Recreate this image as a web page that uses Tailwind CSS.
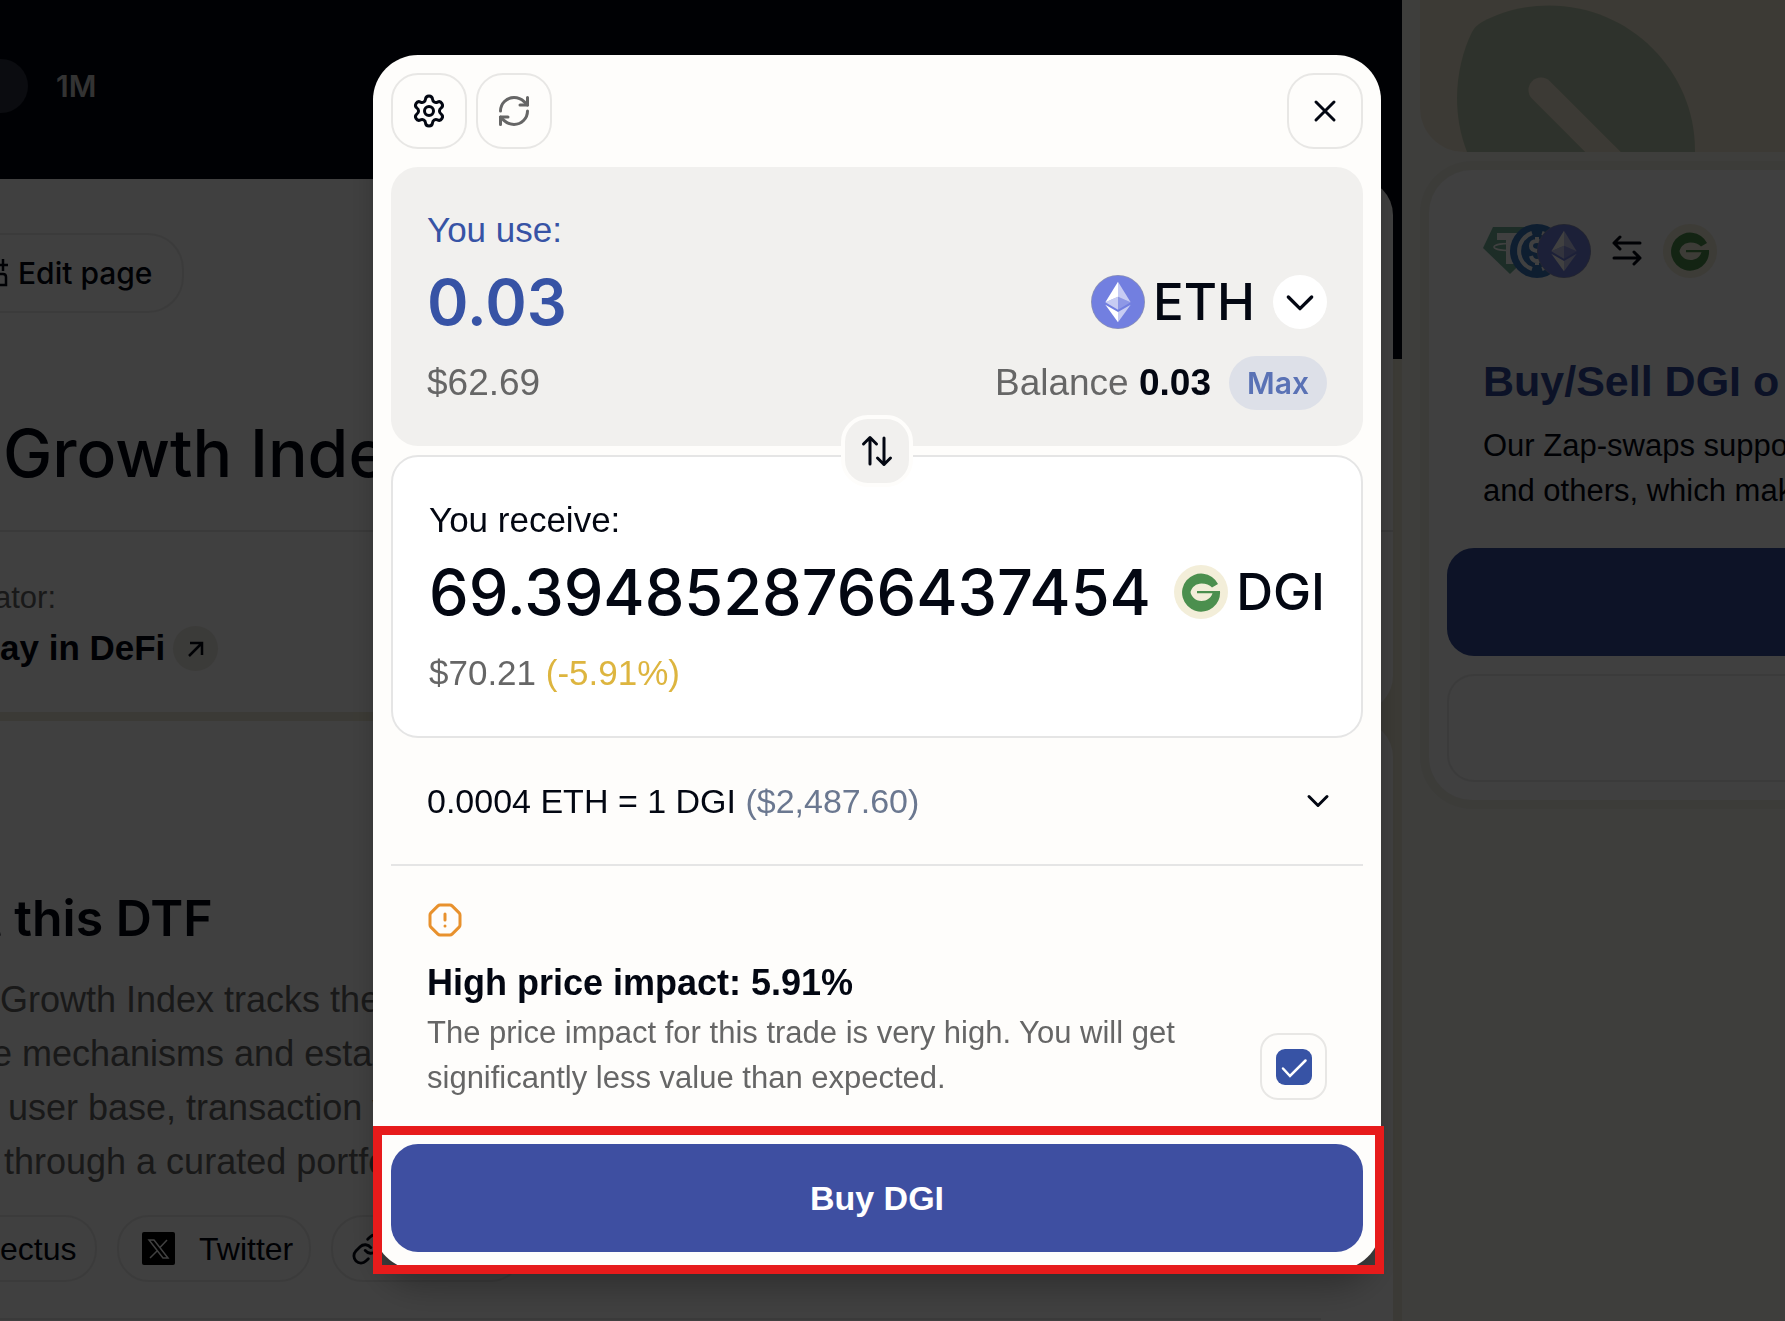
<!DOCTYPE html>
<html lang="en">
<head>
    <meta charset="UTF-8">
    <meta name="viewport" content="width=device-width, initial-scale=1.0">
    <title>Buy DGI</title>
    <script src="https://cdn.jsdelivr.net/npm/@tailwindcss/browser@4"></script>
</head>
<body class="h-screen overflow-hidden bg-[#f6f6ef] font-['Liberation_Sans',Arial,sans-serif] text-[#030712]">

    <!-- Shared token logos -->
    <svg class="hidden" aria-hidden="true">
        <symbol id="eth" viewBox="0 0 32 32">
            <circle cx="16" cy="16" r="16" fill="#8a90b8"/>
            <circle cx="16" cy="16" r="15.5" fill="#727fe0"/>
            <g fill="#fff" transform="translate(-.5 0)">
                <path fill-opacity=".602" d="M16.498 4v8.87l7.497 3.35z"/>
                <path d="M16.498 4L9 16.22l7.498-3.35z"/>
                <path fill-opacity=".602" d="M16.498 21.968v6.027L24 17.616z"/>
                <path d="M16.498 27.995v-6.028L9 17.616z"/>
                <path fill-opacity=".2" d="M16.498 20.573l7.497-4.353-7.497-3.348z"/>
                <path fill-opacity=".602" d="M9 16.22l7.498 4.353v-7.701z"/>
            </g>
        </symbol>
        <symbol id="dgi" viewBox="0 0 54 54">
            <circle cx="27" cy="27" r="27" fill="#f3eed9"/>
            <path fill="#4b8f4e" d="M44 19A19 19 0 1 0 46 26H23v2.300H38.500C37 33 33 36 27.500 36 21 36 17 31 16.500 27 18 22 22 18.500 27.500 18.500c4.500 0 8 1.500 10.500 4z"/>
        </symbol>
    </svg>

    <!-- Page behind the dialog -->
    <div class="flex h-full overflow-hidden">
        <main class="min-w-0 flex-1 bg-[#ece8d6]">
            <div class="h-[359px] bg-[#030712] pt-[59px]">
                <div class="flex h-[54px] items-center gap-7 font-['Inter',sans-serif] text-[30px] font-semibold text-[#ccc]">
                    <span class="h-full w-7 rounded-r-full bg-[#2c3040]"></span>
                    <span>1M</span>
                </div>
            </div>

            <section class="relative mr-[9px] -mt-[180px] h-[533px] rounded-r-[36px] bg-[#fdfdfd] pt-[54px]">
                <button class="flex h-20 w-[184px] items-center gap-[10px] rounded-r-[36px] border-2 border-l-0 border-[#ebebeb] font-['Inter',sans-serif] text-[30px] font-medium whitespace-nowrap">
                    <svg class="h-9 w-2 shrink-0" viewBox="0 0 8 36" fill="none" stroke="currentColor" stroke-width="2.500"><path d="M3 4v12M0 10h8M0 19h3q3 0 3 3v8H0"/></svg>
                    Edit page
                </button>
                <h1 class="mt-[98px] h-[84px] pl-[3px] font-['Inter',sans-serif] text-[66px] leading-[84px] font-medium whitespace-nowrap">Growth Index</h1>
                <hr class="mt-[35px] border-t-2 border-[#e5e5e5]">
                <p class="-ml-[6px] pt-[43px] text-[31px] leading-[45px] text-[#666]">ator:</p>
                <div class="mt-[6px] flex h-[45px] items-center gap-2">
                    <span class="text-[35px] font-bold">ay in DeFi</span>
                    <a href="#" aria-label="Open creator" class="flex size-[45px] items-center justify-center rounded-full bg-[#ebe9e2]">
                        <svg class="size-6" viewBox="0 0 24 24" fill="none" stroke="currentColor" stroke-width="2.500"><path d="M5 19 18 6M6 6h12v12"/></svg>
                    </a>
                </div>
            </section>

            <section class="mt-[9px] mr-[9px] h-[640px] rounded-r-[36px] bg-[#fdfdfd] pt-[166px]">
                <h2 class="-ml-[16px] font-['Inter',sans-serif] text-[50px] leading-[63px] font-semibold whitespace-nowrap">t this DTF</h2>
                <p class="mt-[23px] text-[36px] leading-[54px] whitespace-nowrap text-[#666]">
                    Growth Index tracks the<br>
                    <span class="-ml-2">e mechanisms and establ</span><br>
                    <span class="ml-2">user base, transaction vo</span><br>
                    <span class="ml-1">through a curated portfo</span>
                </p>
                <div class="mt-[26px] flex h-[67px] gap-5 text-[32px]">
                    <a href="#" class="flex w-[97px] items-center rounded-r-[32px] border-2 border-l-0 border-[#ebebeb]">ectus</a>
                    <a href="#" class="flex w-[194px] items-center gap-6 rounded-[32px] border-2 border-[#ebebeb] pl-[23px]">
                        <svg class="size-[33px]" viewBox="0 0 33 33"><rect width="33" height="33" rx="2" fill="#000"/><path d="M7 8h5l14 18h-5zM25 8 17.500 16M15.500 18.500 8 26" fill="none" stroke="#fff" stroke-width="1.500"/></svg>
                        Twitter
                    </a>
                    <a href="#" class="flex w-[192px] items-center gap-4 rounded-[32px] border-2 border-[#ebebeb] pl-[18px]">
                        <svg class="size-[34px]" viewBox="0 0 24 24" fill="none" stroke="currentColor" stroke-width="2" stroke-linecap="round" stroke-linejoin="round"><path d="M10 13a5 5 0 0 0 7.540.540l3-3a5 5 0 0 0-7.070-7.070l-1.720 1.710"/><path d="M14 11a5 5 0 0 0-7.540-.540l-3 3a5 5 0 0 0 7.070 7.070l1.710-1.710"/></svg>
                        Website
                    </a>
                </div>
                <hr class="mt-[36px] mr-[72px] border-t-2 border-[#e5e5e5]">
            </section>
        </main>

        <aside class="w-[383px] pl-[18px]">
            <div class="h-[152px] overflow-hidden rounded-bl-[44px] bg-[#f0e6d2]">
                <svg class="h-[152px] w-[365px]" viewBox="0 0 365 152">
                    <path fill="#b9c8ae" d="M47 152C40 134 37 116 37 98c0-24 6-48 15-66q3-6 10-10C82 11 105 5.500 129 5.500 210 5.500 275 71 275 150v2z"/>
                    <path d="M121 90l80 80" stroke="#f0e6d2" stroke-width="25" stroke-linecap="round"/>
                </svg>
            </div>
            <div class="mt-[9px] rounded-l-[52px] border-[9px] border-r-0 border-[#eeeee4] bg-[#fdfdfd] py-[18px] pl-[18px]">
                <div class="flex h-[126px] items-center pl-9">
                    <svg class="h-[54px] w-[54px]" viewBox="0 0 54 54"><path fill="#74b39c" d="M10 3h34l10 21-27 26L0 24z"/><path fill="#fff" d="M14 9h26v7h-9v24h-8V16h-9z"/><ellipse cx="27" cy="23" rx="16" ry="3.500" fill="none" stroke="#fff" stroke-width="1.500"/></svg>
                    <svg class="-ml-[27px] size-[54px]" viewBox="0 0 54 54"><circle cx="27" cy="27" r="27" fill="#3a78c0"/><g fill="none" stroke="#fff" stroke-width="4"><path d="M22 9a19 19 0 0 0 0 36M32 9a19 19 0 0 1 0 36"/><path d="M33 22q-1-5-6-5-6 0-6 5 0 4 6 5t6 5q0 5-6 5-5 0-6-5M27 13v4m0 20v4"/></g></svg>
                    <svg class="-ml-[27px] size-[54px]"><use href="#eth"/></svg>
                    <svg class="ml-[18px] size-9" viewBox="0 0 36 36" fill="none" stroke="currentColor" stroke-width="3" stroke-linecap="round" stroke-linejoin="round"><path d="M31 10H5l6-6M5 10l6 6M5 25h26l-6-6M31 25l-6 6"/></svg>
                    <svg class="ml-[18px] size-[54px]"><use href="#dgi"/></svg>
                </div>
                <h2 class="mt-[40px] pl-9 text-[43px] leading-[54px] font-bold whitespace-nowrap text-[#304a9c]">Buy/Sell DGI o</h2>
                <p class="mt-[15px] pl-9 text-[31px] leading-[45px] whitespace-nowrap">Our Zap-swaps suppor<br>and others, which make</p>
                <button aria-label="Buy" class="mt-[35px] block h-[108px] w-full rounded-l-[27px] bg-[#344c9c]"></button>
                <button aria-label="Sell" class="mt-[18px] block h-[108px] w-full rounded-l-[27px] border-2 border-r-0 border-[#ebebeb]"></button>
            </div>
        </aside>
    </div>

    <!-- Dialog -->
    <div class="fixed inset-0 flex items-start justify-center bg-black/75 pt-[55px] pr-[31px]">
        <div role="dialog" aria-label="Buy DGI" class="w-[1008px] rounded-[45px] bg-[#fefdfb] shadow-[0_22px_34px_-7px_rgba(0,0,0,0.3)]">
            <div class="flex gap-[9px] p-[18px]">
                <button aria-label="Settings" class="flex size-[76px] items-center justify-center rounded-[27px] border-2 border-[#e8e7e5]">
                    <svg class="size-9" viewBox="0 0 24 24" fill="none" stroke="currentColor" stroke-width="2" stroke-linecap="round" stroke-linejoin="round"><path d="M9.671 4.136a2.340 2.340 0 0 1 4.659 0 2.340 2.340 0 0 0 3.319 1.915 2.340 2.340 0 0 1 2.330 4.033 2.340 2.340 0 0 0 0 3.831 2.340 2.340 0 0 1-2.330 4.033 2.340 2.340 0 0 0-3.319 1.915 2.340 2.340 0 0 1-4.659 0 2.340 2.340 0 0 0-3.320-1.915 2.340 2.340 0 0 1-2.330-4.033 2.340 2.340 0 0 0 0-3.831A2.340 2.340 0 0 1 6.350 6.051a2.340 2.340 0 0 0 3.319-1.915"/><circle cx="12" cy="12" r="3"/></svg>
                </button>
                <button aria-label="Refresh" class="flex size-[76px] items-center justify-center rounded-[27px] border-2 border-[#e8e7e5] text-[#666]">
                    <svg class="size-9" viewBox="0 0 24 24" fill="none" stroke="currentColor" stroke-width="2" stroke-linecap="round" stroke-linejoin="round"><path d="M3 12a9 9 0 0 1 9-9 9.750 9.750 0 0 1 6.740 2.740L21 8"/><path d="M21 3v5h-5"/><path d="M21 12a9 9 0 0 1-9 9 9.750 9.750 0 0 1-6.740-2.740L3 16"/><path d="M8 16H3v5"/></svg>
                </button>
                <button aria-label="Close" class="ml-auto flex size-[76px] items-center justify-center rounded-[27px] border-2 border-[#e8e7e5]">
                    <svg class="size-9" viewBox="0 0 24 24" fill="none" stroke="currentColor" stroke-width="2" stroke-linecap="round"><path d="M18 6 6 18M6 6l12 12"/></svg>
                </button>
            </div>

            <div class="relative mx-[18px] flex flex-col gap-[9px]">
                <div class="rounded-[27px] bg-[#f1f0ee] p-9">
                    <label for="amount" class="block text-[35px] leading-[54px] text-[#3753a5]">You use:</label>
                    <div class="mt-[9px] flex h-[72px] items-center">
                        <input id="amount" type="text" value="0.03" class="min-w-0 flex-1 bg-transparent font-['Inter',sans-serif] text-[63px] leading-[72px] font-semibold text-[#3753a5] outline-none">
                        <button class="flex items-center font-['Inter',sans-serif] text-[51px] font-medium">
                            <svg class="mr-2 size-[54px]"><use href="#eth"/></svg>
                            ETH
                            <span class="ml-[18px] flex size-[54px] items-center justify-center rounded-full bg-white">
                                <svg class="size-10" viewBox="0 0 24 24" fill="none" stroke="currentColor" stroke-width="2" stroke-linecap="round" stroke-linejoin="round"><path d="m5 9 7 7 7-7"/></svg>
                            </span>
                        </button>
                    </div>
                    <div class="mt-[18px] flex h-[54px] items-center text-[37px] text-[#666]">
                        <span class="mr-auto">$62.69</span>
                        <span>Balance <b class="text-[#030712]">0.03</b></span>
                        <button class="ml-[18px] h-[54px] w-[98px] rounded-[27px] bg-[#dde0e8] font-['Inter',sans-serif] text-[30px] font-semibold text-[#5a72b5]">Max</button>
                    </div>
                </div>

                <div class="rounded-[27px] border-2 border-[#e5e5e5] bg-white p-9">
                    <div class="text-[35px] leading-[54px]">You receive:</div>
                    <div class="mt-[9px] flex h-[72px] items-center">
                        <output class="mr-auto font-['Inter',sans-serif] text-[63px] leading-[72px] font-medium">69.3948528766437454</output>
                        <svg class="mr-2 size-[54px]"><use href="#dgi"/></svg>
                        <span class="font-['Inter',sans-serif] text-[51px] font-medium">DGI</span>
                    </div>
                    <div class="mt-[18px] text-[35px] leading-[54px] text-[#666]">$70.21 <span class="text-[#ddb53f]">(-5.91%)</span></div>
                </div>

                <button aria-label="Swap direction" class="absolute top-[248px] left-1/2 flex size-[72px] -translate-x-1/2 items-center justify-center rounded-[27px] border-4 border-[#fefdfb] bg-[#f1f0ee]">
                    <svg class="size-9" viewBox="0 0 36 36" fill="none" stroke="currentColor" stroke-width="3" stroke-linecap="round" stroke-linejoin="round"><path d="M4.500 11 11 4.500l6.500 6.500M11 4.500V31M18.500 25 25 31.500 31.500 25M25 31.500V5"/></svg>
                </button>
            </div>

            <button class="mx-[18px] flex h-[128px] w-[972px] items-center justify-between border-b-2 border-[#e5e5e5] px-9 text-[34px]">
                <span>0.0004 ETH = 1 DGI <span class="text-[#6b7890]">($2,487.60)</span></span>
                <svg class="mr-[-9px] size-9" viewBox="0 0 24 24" fill="none" stroke="currentColor" stroke-width="2" stroke-linecap="round" stroke-linejoin="round"><path d="m6 9 6 6 6-6"/></svg>
            </button>

            <label for="accept" class="flex items-end justify-between px-[54px] pt-9 pb-[26px]">
                <span class="block">
                    <svg class="size-9" viewBox="0 0 24 24" fill="none" stroke="#e8912d" stroke-width="2" stroke-linecap="round" stroke-linejoin="round"><path d="M12 16h.010M12 8v4M15.312 2a2 2 0 0 1 1.414.586l4.688 4.688A2 2 0 0 1 22 8.688v6.624a2 2 0 0 1-.586 1.414l-4.688 4.688a2 2 0 0 1-1.414.586H8.688a2 2 0 0 1-1.414-.586l-4.688-4.688A2 2 0 0 1 2 15.312V8.688a2 2 0 0 1 .586-1.414l4.688-4.688A2 2 0 0 1 8.688 2z"/></svg>
                    <strong class="mt-[18px] block text-[36px] leading-[54px]">High price impact: 5.91%</strong>
                    <span class="block w-[780px] text-[31px] leading-[45px] text-[#666]">The price impact for this trade is very high. You will get significantly less value than expected.</span>
                </span>
                <span class="grid size-[67px] place-items-center rounded-[18px] border-2 border-[#e8e7e5]">
                    <input id="accept" type="checkbox" checked class="col-start-1 row-start-1 size-9 appearance-none rounded-[9px] bg-[#3753a5]">
                    <svg class="pointer-events-none col-start-1 row-start-1 size-9" viewBox="0 0 36 36" fill="none" stroke="#fff" stroke-width="2.500" stroke-linecap="round"><path d="M7 19.500 14 27 29.500 11.500"/></svg>
                </span>
            </label>

            <div class="relative p-[18px]">
                <button class="h-[108px] w-full rounded-[27px] bg-[#3e4fa1] text-[34px] font-bold text-white">Buy DGI</button>
                <!-- Highlight frame -->
                <div class="pointer-events-none absolute top-0 -right-[3px] -bottom-1 left-0 border-[9px] border-[#e71b1b]"></div>
            </div>
        </div>
    </div>
</body>
</html>
